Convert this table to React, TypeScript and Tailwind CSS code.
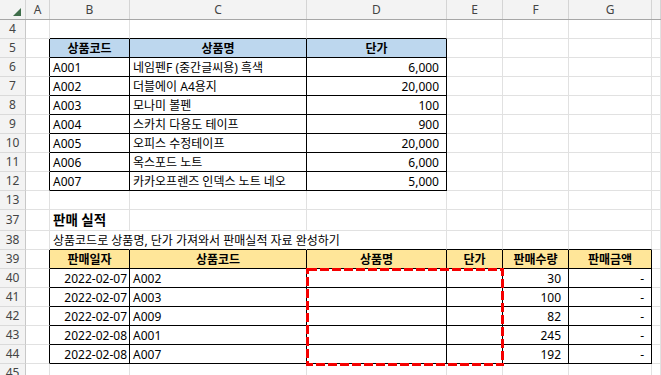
import React from 'react';

type Cell = { t: string; a?: 'l' | 'r' | 'c'; b?: boolean; big?: boolean };
type Row = { n: number; h: string; cells: Record<number, Cell> };

const colW = ['w-[24px]', 'w-[80px]', 'w-[177px]', 'w-[140px]', 'w-[56px]', 'w-[66px]', 'w-[83px]', 'flex-1'];
const letters = ['A', 'B', 'C', 'D', 'E', 'F', 'G', ''];

const products = [
  ['A001', '네임펜F (중간글씨용) 흑색', '6,000'],
  ['A002', '더블에이 A4용지', '20,000'],
  ['A003', '모나미 볼펜', '100'],
  ['A004', '스카치 다용도 테이프', '900'],
  ['A005', '오피스 수정테이프', '20,000'],
  ['A006', '옥스포드 노트', '6,000'],
  ['A007', '카카오프렌즈 인덱스 노트 네오', '5,000'],
];

const sales = [
  ['2022-02-07', 'A002', '30'],
  ['2022-02-07', 'A003', '100'],
  ['2022-02-07', 'A009', '82'],
  ['2022-02-08', 'A001', '245'],
  ['2022-02-08', 'A007', '192'],
];

const rows: Row[] = [
  { n: 4, h: 'h-[19px]', cells: {} },
  {
    n: 5,
    h: 'h-[19px]',
    cells: { 1: { t: '상품코드', a: 'c', b: true }, 2: { t: '상품명', a: 'c', b: true }, 3: { t: '단가', a: 'c', b: true } },
  },
  ...products.map((p, i) => ({
    n: 6 + i,
    h: 'h-[19px]',
    cells: { 1: { t: p[0] }, 2: { t: p[1] }, 3: { t: p[2], a: 'r' as const } },
  })),
  { n: 13, h: 'h-[19px]', cells: {} },
  { n: 37, h: 'h-[21px]', cells: { 1: { t: '판매 실적', b: true, big: true } } },
  { n: 38, h: 'h-[19px]', cells: { 1: { t: '상품코드로 상품명, 단가 가져와서 판매실적 자료 완성하기' } } },
  {
    n: 39,
    h: 'h-[19px]',
    cells: {
      1: { t: '판매일자', a: 'c', b: true },
      2: { t: '상품코드', a: 'c', b: true },
      3: { t: '상품명', a: 'c', b: true },
      4: { t: '단가', a: 'c', b: true },
      5: { t: '판매수량', a: 'c', b: true },
      6: { t: '판매금액', a: 'c', b: true },
    },
  },
  ...sales.map((s, i) => ({
    n: 40 + i,
    h: 'h-[19px]',
    cells: {
      1: { t: s[0], a: 'r' as const },
      2: { t: s[1] },
      5: { t: s[2], a: 'r' as const },
      6: { t: '-', a: 'r' as const },
    },
  })),
  { n: 45, h: 'h-[19px]', cells: {} },
];

// table ranges by row index / column index
function inT(r: number, c: number) {
  if (r >= 1 && r <= 8 && c >= 1 && c <= 3) return true;
  if (r >= 12 && r <= 17 && c >= 1 && c <= 6) return true;
  return false;
}

function fill(r: number, c: number) {
  if (r === 1 && c >= 1 && c <= 3) return 'bg-[#bdd7ee]';
  if (r === 12 && c >= 1 && c <= 6) return 'bg-[#ffe699]';
  return 'bg-white';
}

export default function App() {
  return (
    <div
      className="relative w-[661px] h-[375px] overflow-hidden bg-white text-black text-[12px]"
      style={{ fontFamily: '"Noto Sans", "Noto Sans CJK KR", sans-serif' }}
    >
      {/* 열 머리글 */}
      <div className="flex h-[20px] bg-[#f3f3f3] border-b border-[#a6a6a6] text-[#444] text-[12px]">
        <div className="relative w-[26px] h-full border-r border-[#d4d4d4]">
          <svg className="absolute right-[4px] bottom-[3px]" width="8" height="8" viewBox="0 0 8 8">
            <path d="M8 0 L8 8 L0 8 Z" fill="#3f6e4a" />
          </svg>
        </div>
        {letters.map((l, i) => (
          <div key={i} className={`${colW[i]} h-full flex items-center justify-center border-r border-[#d4d4d4]`}>
            {l}
          </div>
        ))}
      </div>

      {rows.map((row, r) => (
        <div key={row.n} className={`flex ${row.h}`}>
          <div className="w-[26px] h-full flex items-center justify-center bg-[#f3f3f3] border-r border-b border-r-[#c8c8c8] border-b-[#dadada] text-[#444] text-[12px]">
            {row.n}
          </div>
          {colW.map((w, c) => {
            const cell = row.cells[c];
            const rBlack = inT(r, c) || inT(r, c + 1);
            const bBlack = inT(r, c) || inT(r + 1, c);
            const hideR = r === 11 && (c === 1 || c === 2);
            const rCls = rBlack ? 'border-r-black' : hideR ? 'border-r-transparent' : 'border-r-[#e1e1e1]';
            const bCls = bBlack ? 'border-b-black' : 'border-b-[#e1e1e1]';
            const align =
              cell?.a === 'r' ? 'justify-end pr-[7px]' : cell?.a === 'c' ? 'justify-center' : 'justify-start pl-[3px]';
            return (
              <div
                key={c}
                className={`${w} h-full flex items-center border-r border-b ${rCls} ${bCls} ${fill(r, c)} ${align}`}
              >
                {cell && (
                  <span
                    className={`relative z-10 whitespace-nowrap pt-px ${cell.b ? 'font-bold' : ''} ${
                      cell.big ? 'text-[13.5px]' : ''
                    } ${cell.a === 'r' && c === 1 ? '-mr-[5px]' : ''}`}
                  >
                    {cell.t}
                  </span>
                )}
              </div>
            );
          })}
        </div>
      ))}

      {/* 복사 영역 표시 */}
      <svg className="absolute left-0 top-0 pointer-events-none" width="661" height="375">
        <rect
          x="307.5"
          y="269.5"
          width="195"
          height="95"
          fill="none"
          stroke="#f50000"
          strokeWidth="3"
          strokeDasharray="9 3"
          shapeRendering="crispEdges"
        />
      </svg>
    </div>
  );
}
